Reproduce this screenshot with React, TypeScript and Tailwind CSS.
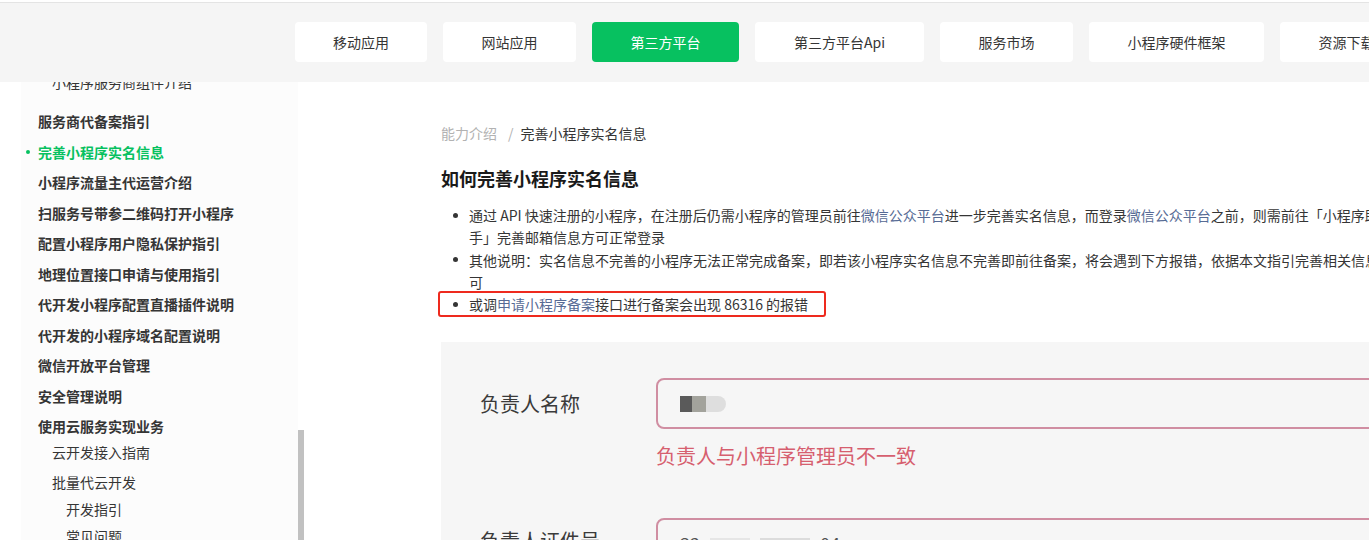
const tabs = [
  { label: '移动应用', w: 'w-[132px]' },
  { label: '网站应用', w: 'w-[133px]' },
  { label: '第三方平台', w: 'w-[147px]', active: true },
  { label: '第三方平台Api', w: 'w-[169px]' },
  { label: '服务市场', w: 'w-[133px]' },
  { label: '小程序硬件框架', w: 'w-[175px]' },
  { label: '资源下载', w: 'w-[133px]' },
];

const sideItems = [
  { text: '小程序服务商组件介绍', cls: 'mt-[-10px] pl-[31px]' },
  { text: '服务商代备案指引', cls: 'mt-[19px] pl-[17px] font-bold' },
  { text: '完善小程序实名信息', cls: 'mt-[10.5px] pl-[5px] font-bold text-[#07c160]', active: true },
  { text: '小程序流量主代运营介绍', cls: 'mt-[10.5px] pl-[17px] font-bold' },
  { text: '扫服务号带参二维码打开小程序', cls: 'mt-[10.5px] pl-[17px] font-bold' },
  { text: '配置小程序用户隐私保护指引', cls: 'mt-[10.5px] pl-[17px] font-bold' },
  { text: '地理位置接口申请与使用指引', cls: 'mt-[10.5px] pl-[17px] font-bold' },
  { text: '代开发小程序配置直播插件说明', cls: 'mt-[10.5px] pl-[17px] font-bold' },
  { text: '代开发的小程序域名配置说明', cls: 'mt-[10.5px] pl-[17px] font-bold' },
  { text: '微信开放平台管理', cls: 'mt-[10.5px] pl-[17px] font-bold' },
  { text: '安全管理说明', cls: 'mt-[10.5px] pl-[17px] font-bold' },
  { text: '使用云服务实现业务', cls: 'mt-[10.5px] pl-[17px] font-bold' },
  { text: '云开发接入指南', cls: 'mt-[6px] pl-[31px]' },
  { text: '批量代云开发', cls: 'mt-[10px] pl-[31px]' },
  { text: '开发指引', cls: 'mt-[7px] pl-[45px]' },
  { text: '常见问题', cls: 'mt-[7px] pl-[45px]' },
];

function Link({ children }: { children: string }) {
  return <span className="text-[#576b95]">{children}</span>;
}

function Bullet() {
  return (
    <span className="flex h-[22.25px] w-[28px] shrink-0 items-center">
      <span className="ml-[12px] h-[5px] w-[5px] rounded-full bg-[#353535]" />
    </span>
  );
}

export default function App() {
  return (
    <div
      className="flex h-[540px] w-[1369px] flex-col overflow-hidden bg-white text-[#353535]"
      style={{ fontFamily: '"Noto Sans CJK SC", "Noto Sans", sans-serif' }}
    >
      <header className="h-[82px] shrink-0 bg-[#f5f5f5]">
        <div className="h-[2px] bg-white" />
        <div className="h-[1px] bg-[#e4e4e4]" />
        <nav className="flex gap-[16px] pl-[295px] pt-[19px]">
          {tabs.map((t) => (
            <div
              key={t.label}
              className={
                t.active
                  ? 'flex h-[40px] shrink-0 items-center justify-center rounded-[4px] bg-[#07c160] text-[14px] text-white ' + t.w
                  : 'flex h-[40px] shrink-0 items-center justify-center rounded-[4px] bg-white text-[14px] text-[#353535] ' + t.w
              }
            >
              {t.label}
            </div>
          ))}
        </nav>
      </header>

      <div className="flex min-h-0 flex-1">
        <aside className="w-[298px] shrink-0 overflow-hidden pl-[21px]">
          <div className="flex h-full flex-col bg-[#fcfcfc] text-[14px] text-[#353535]">
            {sideItems.map((it) => (
              <div key={it.text} className={'flex h-[20px] shrink-0 items-center leading-[20px] ' + it.cls}>
                {it.active && <span className="mr-[8px] h-[4px] w-[4px] rounded-full bg-[#07c160]" />}
                {it.text}
              </div>
            ))}
          </div>
        </aside>
        <div className="flex w-[6px] shrink-0 flex-col pt-[348px]">
          <div className="flex-1 bg-[#c1c1c1]" />
        </div>

        <main className="w-[960px] shrink-0 pl-[137px] pt-[41px]">
          <div className="w-[958px]">
            <div className="flex h-[20px] items-center text-[14px] leading-[20px]">
              <span className="text-[#b2b2b2]">能力介绍</span>
              <span className="ml-[11px] mr-[7px] text-[#b2b2b2]">/</span>
              <span className="text-[#353535]">完善小程序实名信息</span>
            </div>

            <h1 className="mt-[22px] h-[26px] text-[18px] font-bold leading-[26px] text-[#1a1a1a]">
              如何完善小程序实名信息
            </h1>

            <ul className="mt-[13px] text-[14px] leading-[22.25px]">
              <li className="flex">
                <Bullet />
                <div className="w-[930px]">
                  通过 API 快速注册的小程序，在注册后仍需小程序的管理员前往<Link>微信公众平台</Link>进一步完善实名信息，而登录<Link>微信公众平台</Link>之前，则需前往「小程序助手」完善邮箱信息方可正常登录
                </div>
              </li>
              <li className="flex">
                <Bullet />
                <div className="w-[930px]">
                  其他说明：实名信息不完善的小程序无法正常完成备案，即若该小程序实名信息不完善即前往备案，将会遇到下方报错，依据本文指引完善相关信息即可
                </div>
              </li>
              <li className="relative flex">
                <Bullet />
                <div className="w-[930px]">
                  或调<Link>申请小程序备案</Link>接口进行备案会出现 86316 的报错
                </div>
                <span className="absolute left-[-3px] top-[-2px] h-[26px] w-[388px] rounded-[3px] border-2 border-[#ee2a1e]" />
              </li>
            </ul>

            <section className="mt-[27px] h-[300px] bg-[#f6f6f6] pt-[36px]">
              <div className="flex items-center">
                <div className="w-[215px] shrink-0 pl-[39px] text-[20px] text-[#3a3a3a]">负责人名称</div>
                <div className="flex h-[51px] flex-1 items-center rounded-[8px] border-2 border-[#d08ea2] pl-[22px]">
                  <span className="h-[16px] w-[12px] bg-[#5a5a5a]" />
                  <span className="h-[16px] w-[14px] bg-[#a3a39c]" />
                  <span className="h-[16px] w-[20px] rounded-r-[8px] bg-[#dedede]" />
                </div>
              </div>
              <div className="mt-[13px] h-[28px] pl-[215px] text-[20px] leading-[28px] text-[#d65f6f]">
                负责人与小程序管理员不一致
              </div>
              <div className="mt-[48px] flex items-start">
                <div className="w-[215px] shrink-0 pl-[39px] pt-[8px] text-[20px] text-[#3a3a3a]">负责人证件号</div>
                <div className="flex h-[51px] flex-1 items-center gap-[10px] rounded-[8px] border-2 border-[#d08ea2] pl-[22px] text-[18px] text-[#555]">
                  <span>32</span>
                  <span className="h-[12px] w-[40px] bg-[#e6e6e6]" />
                  <span className="h-[12px] w-[50px] bg-[#dcdcdc]" />
                  <span>04</span>
                </div>
              </div>
            </section>
          </div>
        </main>
      </div>
    </div>
  );
}
